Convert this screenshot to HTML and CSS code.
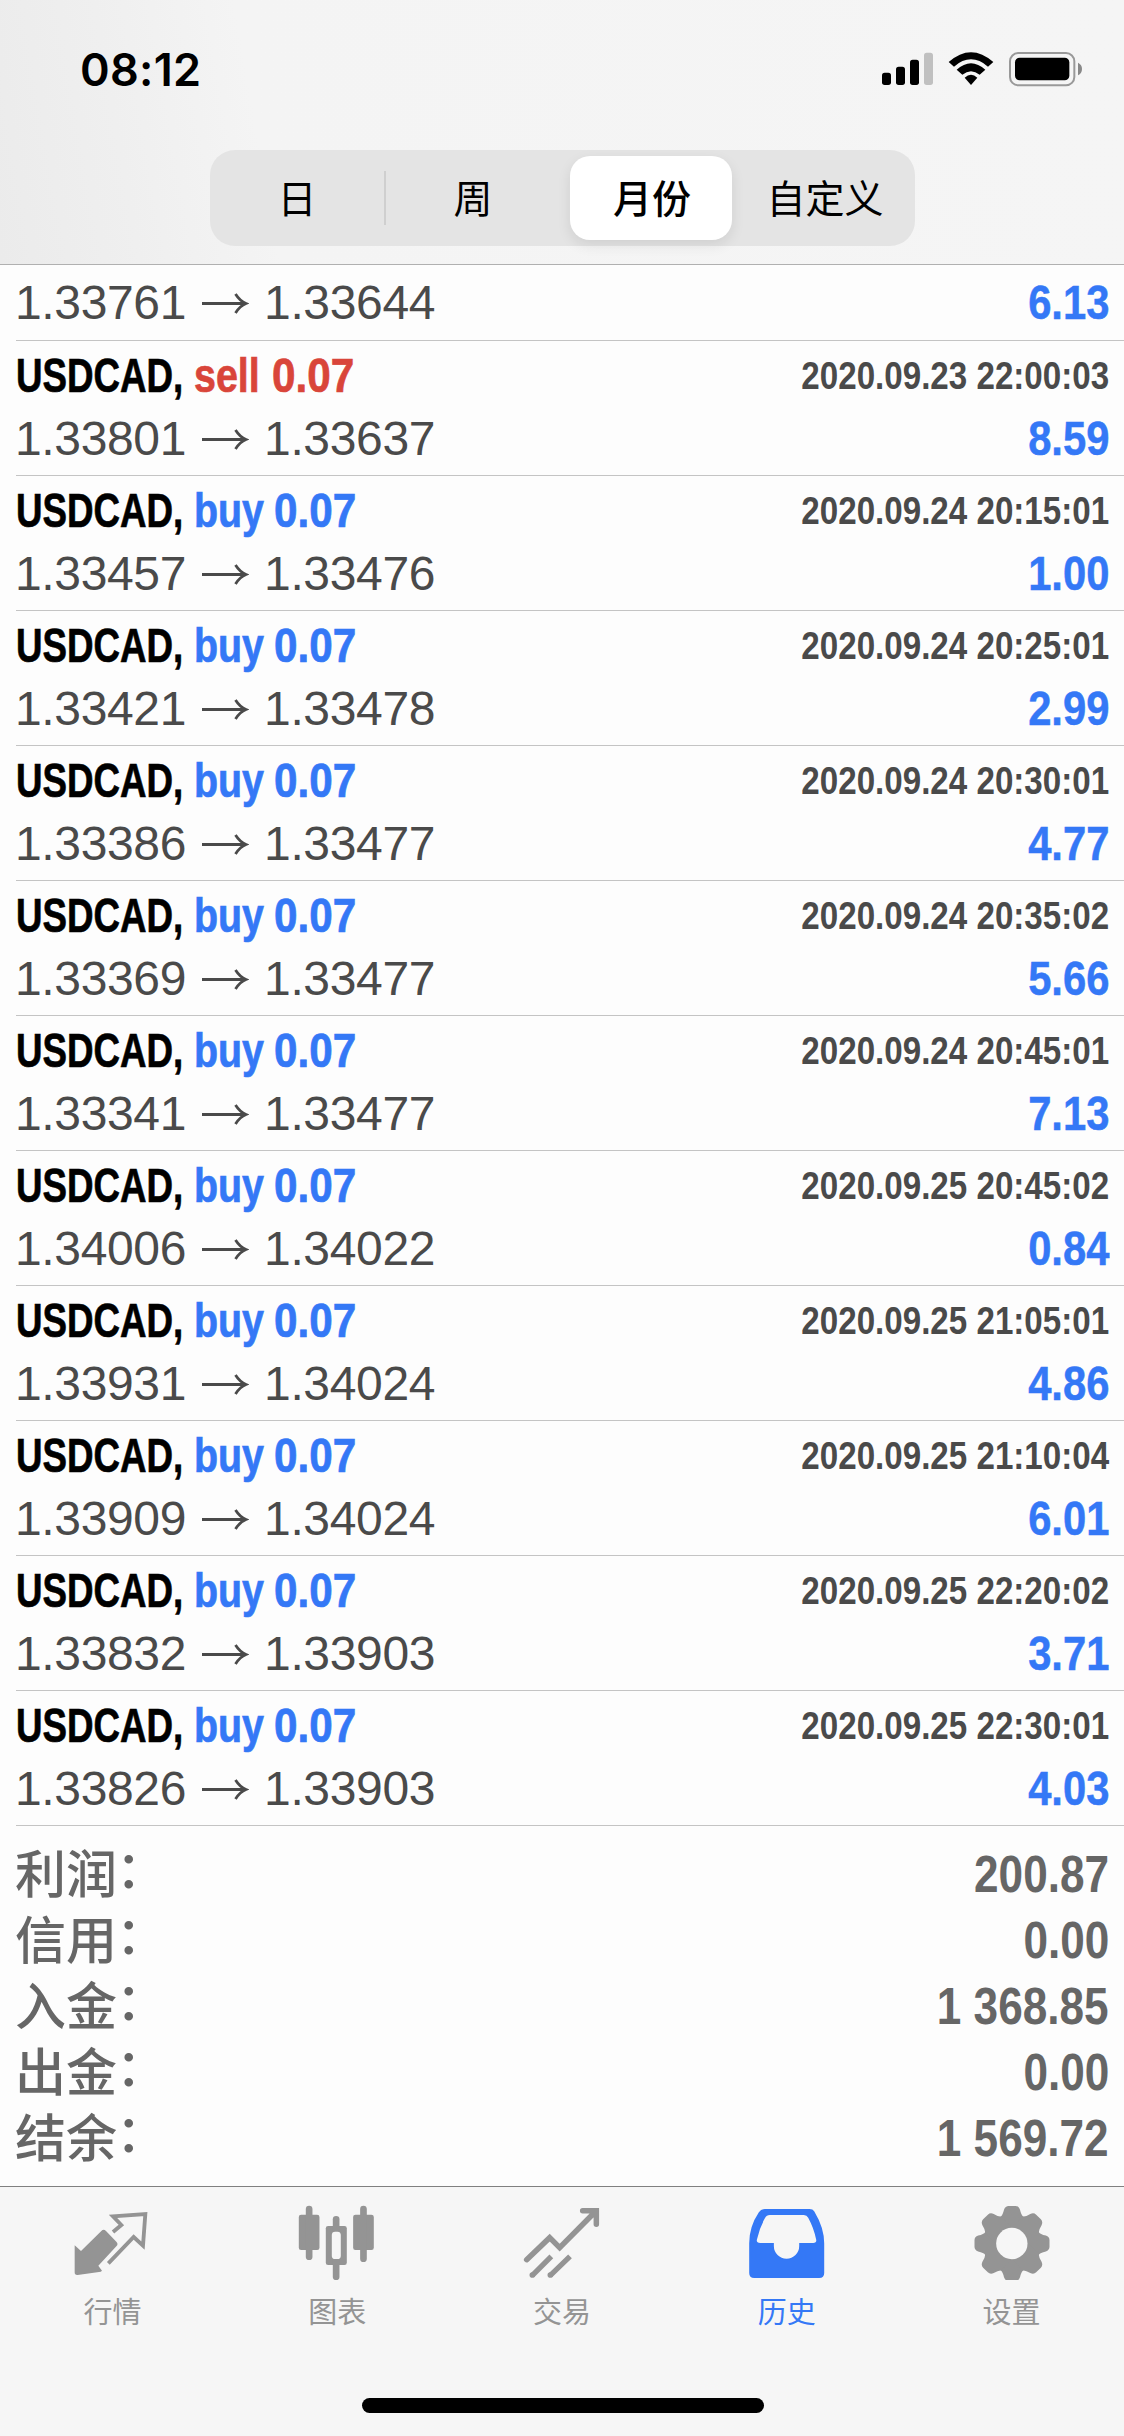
FILE: index.html
```html
<!DOCTYPE html>
<html lang="zh-CN">
<head>
<meta charset="utf-8">
<title>历史</title>
<link rel="stylesheet" href="styles.css">
</head>
<body>
<svg width="0" height="0" class="defs">
  <symbol id="arrow" viewBox="0 0 48 24"><path d="M1 12.5H44.500M34.500 3C37 7 40 10.5 45 12.5C40 14.5 37 18 34.500 22" fill="none" stroke="#4a4a4a" stroke-width="2.8"/></symbol>
</svg>
<header class="header">
  <div class="status">
    <span class="clock">08:12</span>
    <svg class="status-icons" viewBox="0 0 690 180">
      <rect x="36" y="98" width="27" height="37" rx="8"/>
      <rect x="78" y="80" width="27" height="55" rx="8"/>
      <rect x="120" y="59" width="27" height="76" rx="8"/>
      <rect x="162" y="38" width="27" height="97" rx="8" fill="#c0c0c0"/>
      <path d="M236 66Q303 7 370 66L354 80Q303 36 252 80Z"/>
      <path d="M260 89Q303 50 346 89L329 104Q303 83 277 104Z"/>
      <path d="M284 113Q303 96 322 113L303 135Z"/>
      <rect x="420" y="39" width="193" height="97" rx="25" fill="none" stroke="#999" stroke-width="6"/>
      <rect x="435" y="53" width="163" height="68" rx="14"/>
      <path d="M624 68Q636 74 636 87Q636 100 624 106Z" fill="#888"/>
    </svg>
  </div>
  <nav class="segments">
    <span class="segment">日</span><i class="divider"></i>
    <span class="segment">周</span>
    <span class="segment selected">月份</span>
    <span class="segment">自定义</span>
  </nav>
</header>
<main class="deals">
  <section class="deal partial"><div class="line prices"><span class="price">1.33761 <svg class="arrow"><use href="#arrow"/></svg> 1.33644</span><b class="profit">6.13</b></div></section>
  <section class="deal"><div class="line head"><b class="symbol">USDCAD,</b><b class="side sell">sell</b><b class="volume sell sell-volume">0.07</b><b class="time">2020.09.23 22:00:03</b></div><div class="line prices"><span class="price">1.33801 <svg class="arrow"><use href="#arrow"/></svg> 1.33637</span><b class="profit">8.59</b></div></section>
  <section class="deal"><div class="line head"><b class="symbol">USDCAD,</b><b class="side">buy</b><b class="volume">0.07</b><b class="time">2020.09.24 20:15:01</b></div><div class="line prices"><span class="price">1.33457 <svg class="arrow"><use href="#arrow"/></svg> 1.33476</span><b class="profit">1.00</b></div></section>
  <section class="deal"><div class="line head"><b class="symbol">USDCAD,</b><b class="side">buy</b><b class="volume">0.07</b><b class="time">2020.09.24 20:25:01</b></div><div class="line prices"><span class="price">1.33421 <svg class="arrow"><use href="#arrow"/></svg> 1.33478</span><b class="profit">2.99</b></div></section>
  <section class="deal"><div class="line head"><b class="symbol">USDCAD,</b><b class="side">buy</b><b class="volume">0.07</b><b class="time">2020.09.24 20:30:01</b></div><div class="line prices"><span class="price">1.33386 <svg class="arrow"><use href="#arrow"/></svg> 1.33477</span><b class="profit">4.77</b></div></section>
  <section class="deal"><div class="line head"><b class="symbol">USDCAD,</b><b class="side">buy</b><b class="volume">0.07</b><b class="time">2020.09.24 20:35:02</b></div><div class="line prices"><span class="price">1.33369 <svg class="arrow"><use href="#arrow"/></svg> 1.33477</span><b class="profit">5.66</b></div></section>
  <section class="deal"><div class="line head"><b class="symbol">USDCAD,</b><b class="side">buy</b><b class="volume">0.07</b><b class="time">2020.09.24 20:45:01</b></div><div class="line prices"><span class="price">1.33341 <svg class="arrow"><use href="#arrow"/></svg> 1.33477</span><b class="profit">7.13</b></div></section>
  <section class="deal"><div class="line head"><b class="symbol">USDCAD,</b><b class="side">buy</b><b class="volume">0.07</b><b class="time">2020.09.25 20:45:02</b></div><div class="line prices"><span class="price">1.34006 <svg class="arrow"><use href="#arrow"/></svg> 1.34022</span><b class="profit">0.84</b></div></section>
  <section class="deal"><div class="line head"><b class="symbol">USDCAD,</b><b class="side">buy</b><b class="volume">0.07</b><b class="time">2020.09.25 21:05:01</b></div><div class="line prices"><span class="price">1.33931 <svg class="arrow"><use href="#arrow"/></svg> 1.34024</span><b class="profit">4.86</b></div></section>
  <section class="deal"><div class="line head"><b class="symbol">USDCAD,</b><b class="side">buy</b><b class="volume">0.07</b><b class="time">2020.09.25 21:10:04</b></div><div class="line prices"><span class="price">1.33909 <svg class="arrow"><use href="#arrow"/></svg> 1.34024</span><b class="profit">6.01</b></div></section>
  <section class="deal"><div class="line head"><b class="symbol">USDCAD,</b><b class="side">buy</b><b class="volume">0.07</b><b class="time">2020.09.25 22:20:02</b></div><div class="line prices"><span class="price">1.33832 <svg class="arrow"><use href="#arrow"/></svg> 1.33903</span><b class="profit">3.71</b></div></section>
  <section class="deal"><div class="line head"><b class="symbol">USDCAD,</b><b class="side">buy</b><b class="volume">0.07</b><b class="time">2020.09.25 22:30:01</b></div><div class="line prices"><span class="price">1.33826 <svg class="arrow"><use href="#arrow"/></svg> 1.33903</span><b class="profit">4.03</b></div></section>
</main>
<section class="summary">
  <div class="total"><span class="name">利润<i class="colon">：</i></span><b class="amount">200.87</b></div>
  <div class="total"><span class="name">信用<i class="colon">：</i></span><b class="amount">0.00</b></div>
  <div class="total"><span class="name">入金<i class="colon">：</i></span><b class="amount">1 368.85</b></div>
  <div class="total"><span class="name">出金<i class="colon">：</i></span><b class="amount">0.00</b></div>
  <div class="total"><span class="name">结余<i class="colon">：</i></span><b class="amount">1 569.72</b></div>
</section>
<footer class="footer">
  <nav class="tabs">
    <a class="tab">
      <svg class="tab-icon" viewBox="37 15 240 240">
        <path d="M45 151L64 168L125 108Q132 101 139 108L170 140Q177 147 170 154L116 212L127 227Q124 231 118 231L54 240Q45 241 45 232Z" fill="#949494"/>
        <path d="M160 111L185 90L160 64L257 57L250 152L222 126L146 205" fill="none" stroke="#949494" stroke-width="11.5"/>
      </svg>行情</a>
    <a class="tab">
      <svg class="tab-icon" viewBox="711.6 15 240 240">
        <g fill="#949494">
          <rect x="717" y="59" width="62" height="106" rx="7"/><rect x="738" y="32" width="20" height="163" rx="10"/>
          <rect x="880" y="59" width="62" height="106" rx="7"/><rect x="901" y="32" width="20" height="169" rx="10"/>
          <rect x="798" y="93" width="63" height="117" rx="7"/><rect x="819" y="63" width="20" height="192" rx="10"/>
        </g>
        <rect x="816" y="110" width="27" height="82" rx="10" fill="#f6f6f6"/>
      </svg>图表</a>
    <a class="tab">
      <svg class="tab-icon" viewBox="36 15 240 240">
        <path d="M50 194L119 128L149 158L258 48M218 47H259V88" fill="none" stroke="#949494" stroke-width="16.5" stroke-linecap="round"/>
        <path d="M67 241L124 184M121 241L180 184" fill="none" stroke="#949494" stroke-width="16"/>
        <circle cx="67" cy="240" r="8.5" fill="#949494"/><circle cx="121" cy="240" r="8.5" fill="#949494"/>
      </svg>交易</a>
    <a class="tab active">
      <svg class="tab-icon" viewBox="710.4 15 240 240">
        <path fill="#3478f6" fill-rule="evenodd" d="M764 42H898Q908 42 912 49Q942 99 942 145V234Q942 249 927 249H732Q717 249 717 234V145Q717 95 746 52Q752 42 764 42ZM779 60Q769 60 764 70Q748 98 740 134Q738 144 750 144H791V153A38 38 0 0 0 867 153V144H909Q920 144 918 134Q911 99 894 68Q890 60 881 60Z"/>
      </svg>历史</a>
    <a class="tab">
      <svg class="tab-icon" viewBox="95 15 240 240">
        <g fill="#949494">
          <circle cx="215" cy="145.500" r="87"/>
          <path id="cog" d="M181 65Q187 61 191 44Q195 33 205 33H225Q235 33 239 44Q243 61 249 65V226Q243 230 239 247Q235 258 225 258H205Q195 258 191 247Q187 230 181 226Z"/>
          <use href="#cog" transform="rotate(45 215 145.500)"/>
          <use href="#cog" transform="rotate(90 215 145.500)"/>
          <use href="#cog" transform="rotate(135 215 145.500)"/>
        </g>
        <circle cx="214.500" cy="145.500" r="47" fill="#f6f6f6"/>
      </svg>设置</a>
  </nav>
  <div class="home"></div>
</footer>
</body>
</html>
```

FILE: styles.css
```css
* { box-sizing: border-box; }
body {
  margin: 0;
  width: 1124px;
  height: 2436px;
  background: #fdfdfd;
  font-family: "Liberation Sans", "Noto Sans CJK SC", sans-serif;
  display: flex;
  flex-direction: column;
  overflow: hidden;
}
.defs { display: none; }
.header {
  height: 265px;
  flex: none;
  border-bottom: 1px solid #b0b0b0;
  background: linear-gradient(80deg, #ebebeb 0, #efefef 12%, #f4f4f4 24%, #f5f5f5 100%);
}
.status {
  height: 150px;
  display: flex;
  justify-content: space-between;
  padding: 40px 24px 0 80px;
}
.clock {
  font: 600 45px/60px Inter, sans-serif;
  letter-spacing: 0.3px;
}
.status-icons { width: 230px; height: 60px; }
.segments {
  width: 705px;
  height: 96px;
  margin-left: 210px;
  padding: 6px 0;
  border-radius: 25px;
  background: #e4e4e4;
  display: flex;
  align-items: center;
}
.segment {
  width: 174px;
  height: 84px;
  text-align: center;
  font: 400 39px/80px "Noto Sans CJK SC", sans-serif;
}
.divider { width: 2px; height: 54px; background: #cfcfcf; }
.segment.selected {
  width: 162px;
  margin: 0 6px 0 10px;
  padding-left: 2px;
  border-radius: 20px;
  background: #fff;
  font-weight: 500;
  box-shadow: 0 5px 14px rgba(0, 0, 0, .09);
}
.deal {
  height: 135px;
  margin-left: 16px;
  padding: 3px 15px 0 0;
  border-bottom: 1px solid #c4c4c4;
}
.deal.partial { height: 76px; padding-top: 8px; }
.line { display: flex; white-space: nowrap; }
.head { height: 65px; font-size: 48px; line-height: 64px; }
.prices { height: 60px; justify-content: space-between; font-size: 48px; line-height: 60px; }
.price { color: #4a4a4a; margin-left: -1px; letter-spacing: -0.35px; }
.arrow { width: 48px; height: 24px; margin: 0 2px 4px 2px; vertical-align: baseline; }
.symbol, .side, .volume {
  transform-origin: left;
  color: #3478f6;
  -webkit-text-stroke: 0.7px currentColor;
}
.symbol { width: 178px; color: #000; transform: scaleX(.765); }
.side { width: 80px; transform: scaleX(.82); }
.volume { width: 90px; transform: scaleX(.88); }
.side.sell { width: 78px; }
.side.sell, .volume.sell { color: #d9453a; }
.time {
  margin-left: auto;
  color: #4a4a4a;
  font-size: 39px;
  line-height: 63px;
  transform: scaleX(.85);
  transform-origin: right;
}
.profit {
  color: #3478f6;
  -webkit-text-stroke: 0.5px currentColor;
  transform: scaleX(.87);
  transform-origin: right;
}
.summary { height: 360px; padding: 15px 15px 0 15px; color: #666; }
.total { height: 66px; display: flex; justify-content: space-between; }
.name { font: 500 51px/60px "Noto Sans CJK SC", sans-serif; }
.colon { display: inline-block; font-style: normal; line-height: 60px; transform: translate(-1px, -5px); }
.amount { font-size: 51px; line-height: 68px; transform: scaleX(.865); transform-origin: right; }
.footer {
  height: 250px;
  border-top: 1px solid #808080;
  background: #f6f6f6;
}
.tabs { display: flex; height: 211px; padding-top: 13px; }
.tab {
  flex: 1;
  display: flex;
  flex-direction: column;
  align-items: center;
  color: #949494;
  font: 400 29px/42px "Noto Sans CJK SC", sans-serif;
  gap: 9px;
}
.tab.active { color: #3478f6; }
.tab-icon { width: 80px; height: 80px; }
.home { width: 402px; height: 15px; margin: 0 auto 0 362px; border-radius: 8px; background: #000; }
```
